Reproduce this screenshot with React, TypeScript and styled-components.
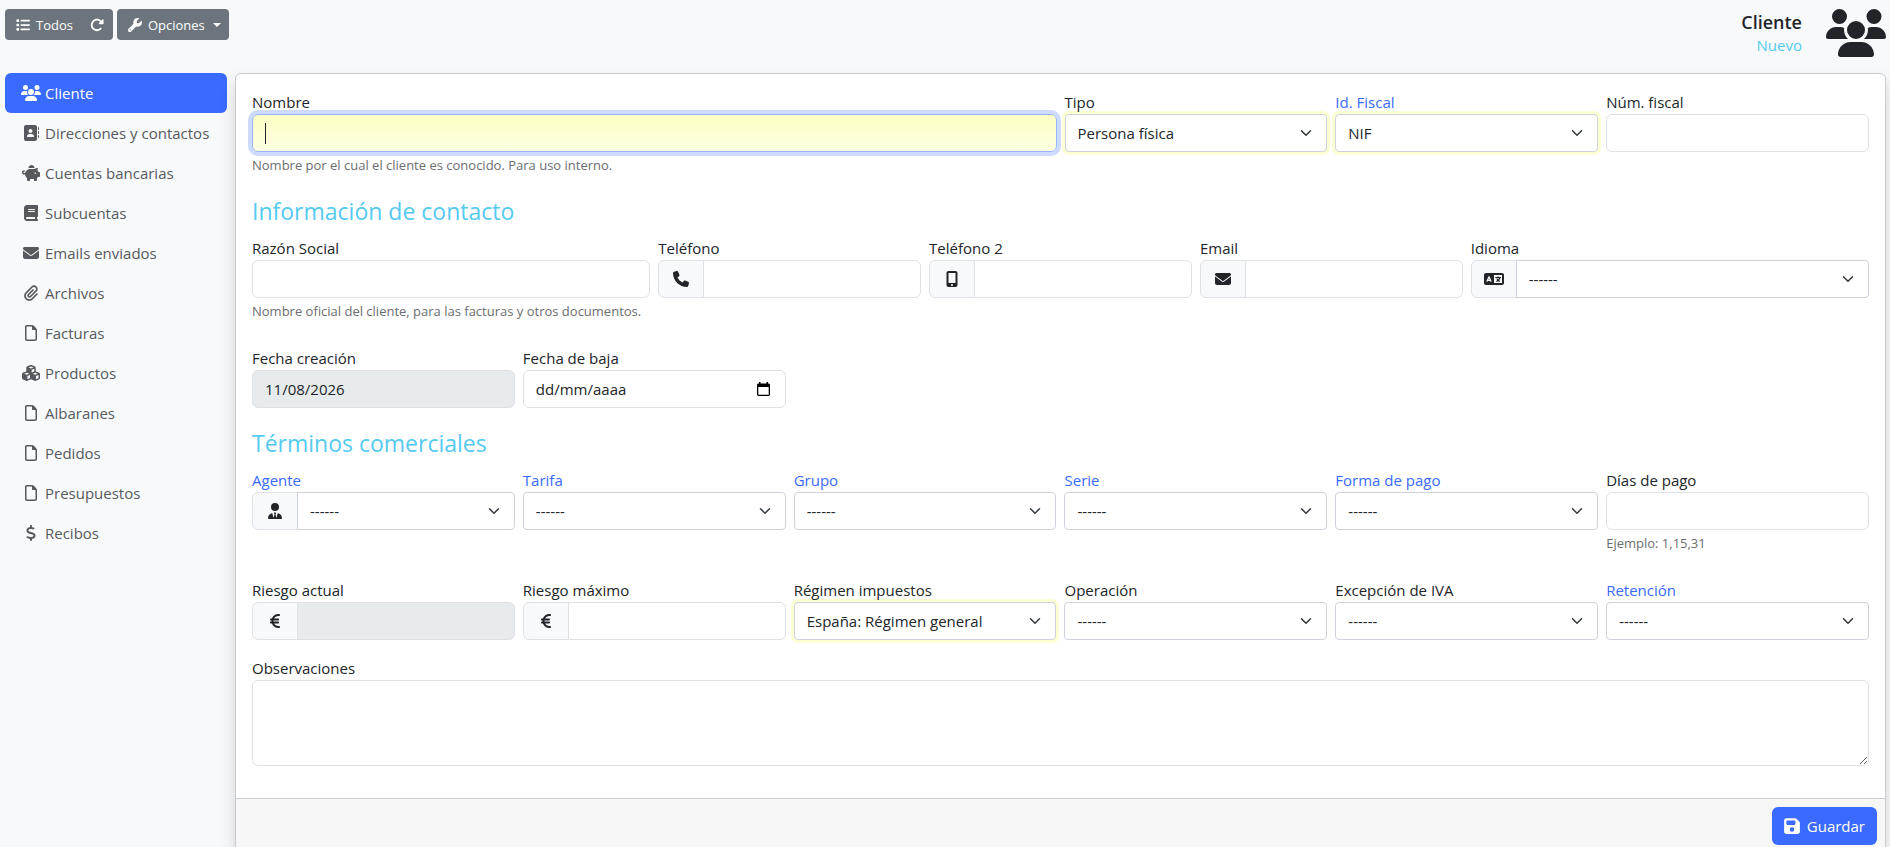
import React, { useId } from "react";
import styled, { createGlobalStyle, css } from "styled-components";
import {
  FaAddressBook, FaBook, FaCubes, FaDollarSign, FaEnvelope, FaEuroSign, FaFloppyDisk, FaLanguage, FaList,
  FaMobileScreenButton, FaPaperclip, FaPhone, FaPiggyBank, FaRegFile, FaRotateRight, FaUserTie, FaUsers, FaWrench,
} from "react-icons/fa6";

const color = {
  page: "#f8f9fb",
  text: "#212529",
  muted: "#6b6e71",
  nav: "#56595d",
  primary: "#3a6aff",
  info: "#55caf1",
  secondary: "#6c757d",
  border: "#dee2e6",
  selectBorder: "#ced2dc",
  cardBorder: "#c9cbce",
  addon: "#f8f9fb",
  disabled: "#e8ebed",
};

const GlobalStyle = createGlobalStyle`
  *, *::before, *::after { box-sizing: border-box; }
  body {
    margin: 0;
    background: ${color.page};
    color: ${color.text};
    font-family: "Segoe UI", "Open Sans", "Noto Sans", sans-serif;
    font-size: 15px;
    line-height: 24px;
  }
  button, input, select, textarea { font: inherit; color: inherit; }
`;

const Page = styled.div`
  padding: 9px 4px 16px 5px;
`;

const Header = styled.header`
  display: flex;
  justify-content: space-between;
  align-items: flex-start;
  margin-bottom: 16px;
`;

const Toolbar = styled.div`
  display: flex;
  gap: 4px;
`;

const ButtonGroup = styled.div`
  display: flex;
  border-radius: 4px;
  overflow: hidden;
`;

const ToolButton = styled.button`
  display: flex;
  align-items: center;
  gap: 6px;
  height: 31px;
  padding: 0 8px 0 11px;
  border: 0;
  background: ${color.secondary};
  color: #fff;
  font-size: 13px;
  svg { width: 14px; height: 14px; }
`;

const IconButton = styled(ToolButton)`
  padding: 0 9px;
`;

const DropdownButton = styled(ToolButton)`
  border-radius: 4px;
  &::after {
    content: "";
    margin-left: 2px;
    border: 4px solid transparent;
    border-top-color: #fff;
    border-bottom: 0;
  }
`;

const Heading = styled.div`
  display: flex;
  gap: 24px;
  text-align: right;
  svg { width: 60px; height: 48px; }
`;

const Title = styled.h1`
  margin: 0;
  font-size: 18px;
  line-height: 26px;
  font-weight: 600;
`;

const Subtitle = styled.p`
  margin: 0;
  line-height: 20px;
  color: ${color.info};
`;

const Columns = styled.div`
  display: flex;
  align-items: flex-start;
  gap: 8px;
`;

const Nav = styled.nav`
  display: flex;
  flex-direction: column;
  flex: 0 0 222px;
`;

const NavLink = styled.a<{ $active?: boolean }>`
  display: flex;
  align-items: center;
  gap: 4px;
  padding: 8px 16px;
  border-radius: 6px;
  color: ${(p) => (p.$active ? "#fff" : color.nav)};
  background: ${(p) => (p.$active ? color.primary : "transparent")};
  text-decoration: none;
  white-space: nowrap;
`;

const NavIcon = styled.span`
  display: flex;
  justify-content: center;
  flex: 0 0 20px;
  svg { height: 16px; width: 20px; }
`;

const Card = styled.form`
  flex: 1;
  min-width: 0;
  border: 1px solid ${color.cardBorder};
  border-radius: 6px;
  background: #fff;
  box-shadow: 0 8px 16px rgba(0, 0, 0, 0.15);
`;

const CardBody = styled.div`
  padding: 16px;
`;

const CardFooter = styled.div`
  display: flex;
  justify-content: flex-end;
  padding: 8px;
  border-top: 1px solid ${color.cardBorder};
  border-radius: 0 0 6px 6px;
  background: #f7f7f7;
`;

const SaveButton = styled.button`
  display: flex;
  align-items: center;
  gap: 7px;
  height: 38px;
  padding: 0 12px;
  border: 0;
  border-radius: 6px;
  background: ${color.primary};
  color: #fff;
  svg { width: 16px; height: 18px; }
`;

const SectionTitle = styled.h2`
  margin: 0 0 8px;
  padding-top: 2px;
  font-size: 23px;
  line-height: 34px;
  font-weight: 400;
  color: ${color.info};
`;

const Row = styled.div<{ $loose?: boolean }>`
  display: grid;
  grid-template-columns: repeat(12, minmax(0, 1fr));
  column-gap: 8px;
  align-items: start;
  margin-bottom: ${(p) => (p.$loose ? 24 : 16)}px;
`;

const Cell = styled.div<{ $span: number }>`
  grid-column: span ${(p) => p.$span};
`;

const Label = styled.label`
  display: block;
  a { color: ${color.primary}; text-decoration: none; }
`;

const Hint = styled.small`
  display: block;
  padding-top: 2px;
  font-size: 13px;
  line-height: 22px;
  color: ${color.muted};
`;

const control = css`
  display: block;
  width: 100%;
  min-width: 0;
  height: 38px;
  padding: 6px 12px;
  border: 1px solid ${color.border};
  border-radius: 6px;
  background: #fff;
  outline: 0;
`;

const Input = styled.input`
  ${control}
  &:disabled { background: ${color.disabled}; color: ${color.text}; }
`;

const RequiredInput = styled(Input)`
  border-color: #98b4ff;
  background: linear-gradient(#fdffc4, #feffe2);
  box-shadow: 0 0 0 4px rgba(58, 106, 255, 0.25);
`;

const chevron =
  "url(\"data:image/svg+xml,%3Csvg xmlns='http://www.w3.org/2000/svg' viewBox='0 0 16 16'%3E%3Cpath fill='none' stroke='%23343a40' stroke-linecap='round' stroke-linejoin='round' stroke-width='2' d='m2 5 6 6 6-6'/%3E%3C/svg%3E\")";

const Select = styled.select<{ $required?: boolean }>`
  ${control}
  appearance: none;
  padding-right: 36px;
  border-color: ${color.selectBorder};
  border-radius: 4px;
  background: #fff ${chevron} no-repeat right 14px center / 12px 12px;
  ${(p) => p.$required && "box-shadow: 0 0 0 3px #fcffd2;"}
`;

const Textarea = styled.textarea`
  ${control}
  height: auto;
  resize: vertical;
`;

const Group = styled.div`
  display: flex;
  ${Input}, ${Select} {
    flex: 1;
    margin-left: -1px;
    border-top-left-radius: 0;
    border-bottom-left-radius: 0;
  }
`;

const Addon = styled.span`
  display: flex;
  align-items: center;
  justify-content: center;
  flex: 0 0 46px;
  border: 1px solid ${color.border};
  border-radius: 6px 0 0 6px;
  background: ${color.addon};
  svg { width: 20px; height: 16px; }
`;

const CaretBox = styled.div`
  position: relative;
  &::after {
    content: "";
    position: absolute;
    top: 9px;
    left: 13px;
    width: 1px;
    height: 21px;
    background: ${color.text};
  }
`;

const DateBox = styled.div`
  ${control}
  display: flex;
  align-items: center;
  input {
    flex: 1;
    min-width: 0;
    padding: 0;
    border: 0;
    outline: 0;
    background: none;
  }
  input::placeholder { color: ${color.text}; opacity: 1; }
  button {
    display: flex;
    padding: 0 3px;
    border: 0;
    background: none;
    color: #000;
  }
`;

const navItems = [
  { label: "Cliente", Icon: FaUsers },
  { label: "Direcciones y contactos", Icon: FaAddressBook },
  { label: "Cuentas bancarias", Icon: FaPiggyBank },
  { label: "Subcuentas", Icon: FaBook },
  { label: "Emails enviados", Icon: FaEnvelope },
  { label: "Archivos", Icon: FaPaperclip },
  { label: "Facturas", Icon: FaRegFile },
  { label: "Productos", Icon: FaCubes },
  { label: "Albaranes", Icon: FaRegFile },
  { label: "Pedidos", Icon: FaRegFile },
  { label: "Presupuestos", Icon: FaRegFile },
  { label: "Recibos", Icon: FaDollarSign },
];

type FieldProps = {
  label: string;
  span?: number;
  linked?: boolean;
  hint?: string;
  icon?: React.ReactNode;
  children: (id: string) => React.ReactNode;
};

function Field({ label, span = 2, linked, hint, icon, children }: FieldProps) {
  const id = useId();
  return (
    <Cell $span={span}>
      <Label htmlFor={id}>{linked ? <a href="#">{label}</a> : label}</Label>
      {icon ? <Group><Addon>{icon}</Addon>{children(id)}</Group> : children(id)}
      {hint && <Hint>{hint}</Hint>}
    </Cell>
  );
}

type TextProps = Omit<FieldProps, "children"> & { value?: string; disabled?: boolean };

function TextField({ value, disabled, ...field }: TextProps) {
  return <Field {...field}>{(id) => <Input id={id} defaultValue={value} disabled={disabled} />}</Field>;
}

type SelectProps = Omit<FieldProps, "children"> & { value?: string; required?: boolean };

function SelectField({ value = "------", required, ...field }: SelectProps) {
  return (
    <Field {...field}>
      {(id) => <Select id={id} $required={required}><option>{value}</option></Select>}
    </Field>
  );
}

function CalendarIcon() {
  return (
    <svg width="13" height="15" viewBox="0 0 13 15" aria-hidden="true">
      <path fill="currentColor" fillRule="evenodd" d="M2 0h1.500v1.500h6V0H11v1.500h1l1 1V13l-1 1H1l-1-1V2.500l1-1h1zM1.300 5v7.700h10.400V5z" />
    </svg>
  );
}

export default function App() {
  return (
    <Page>
      <GlobalStyle />
      <Header>
        <Toolbar>
          <ButtonGroup>
            <ToolButton type="button"><FaList />Todos</ToolButton>
            <IconButton type="button" aria-label="Recargar"><FaRotateRight /></IconButton>
          </ButtonGroup>
          <DropdownButton type="button"><FaWrench />Opciones</DropdownButton>
        </Toolbar>
        <Heading>
          <div>
            <Title>Cliente</Title>
            <Subtitle>Nuevo</Subtitle>
          </div>
          <FaUsers />
        </Heading>
      </Header>
      <Columns>
        <Nav>
          {navItems.map(({ label, Icon }, i) => (
            <NavLink key={label} href="#" $active={i === 0}>
              <NavIcon><Icon /></NavIcon>
              {label}
            </NavLink>
          ))}
        </Nav>
        <Card onSubmit={(e) => e.preventDefault()}>
          <CardBody>
            <Row>
              <Field label="Nombre" span={6} hint="Nombre por el cual el cliente es conocido. Para uso interno.">
                {(id) => <CaretBox><RequiredInput id={id} /></CaretBox>}
              </Field>
              <SelectField label="Tipo" value="Persona física" required />
              <SelectField label="Id. Fiscal" linked value="NIF" required />
              <TextField label="Núm. fiscal" />
            </Row>
            <SectionTitle>Información de contacto</SectionTitle>
            <Row $loose>
              <TextField label="Razón Social" span={3} hint="Nombre oficial del cliente, para las facturas y otros documentos." />
              <TextField label="Teléfono" icon={<FaPhone />} />
              <TextField label="Teléfono 2" icon={<FaMobileScreenButton />} />
              <TextField label="Email" icon={<FaEnvelope />} />
              <SelectField label="Idioma" span={3} icon={<FaLanguage />} />
            </Row>
            <Row>
              <TextField label="Fecha creación" value="11/08/2026" disabled />
              <Field label="Fecha de baja">
                {(id) => (
                  <DateBox>
                    <input id={id} placeholder="dd/mm/aaaa" />
                    <button type="button" aria-label="Abrir calendario"><CalendarIcon /></button>
                  </DateBox>
                )}
              </Field>
            </Row>
            <SectionTitle>Términos comerciales</SectionTitle>
            <Row $loose>
              <SelectField label="Agente" linked icon={<FaUserTie />} />
              <SelectField label="Tarifa" linked />
              <SelectField label="Grupo" linked />
              <SelectField label="Serie" linked />
              <SelectField label="Forma de pago" linked />
              <TextField label="Días de pago" hint="Ejemplo: 1,15,31" />
            </Row>
            <Row>
              <TextField label="Riesgo actual" icon={<FaEuroSign />} disabled />
              <TextField label="Riesgo máximo" icon={<FaEuroSign />} />
              <SelectField label="Régimen impuestos" value="España: Régimen general" required />
              <SelectField label="Operación" />
              <SelectField label="Excepción de IVA" />
              <SelectField label="Retención" linked />
            </Row>
            <Row>
              <Field label="Observaciones" span={12}>
                {(id) => <Textarea id={id} rows={3} />}
              </Field>
            </Row>
          </CardBody>
          <CardFooter>
            <SaveButton type="submit"><FaFloppyDisk />Guardar</SaveButton>
          </CardFooter>
        </Card>
      </Columns>
    </Page>
  );
}
